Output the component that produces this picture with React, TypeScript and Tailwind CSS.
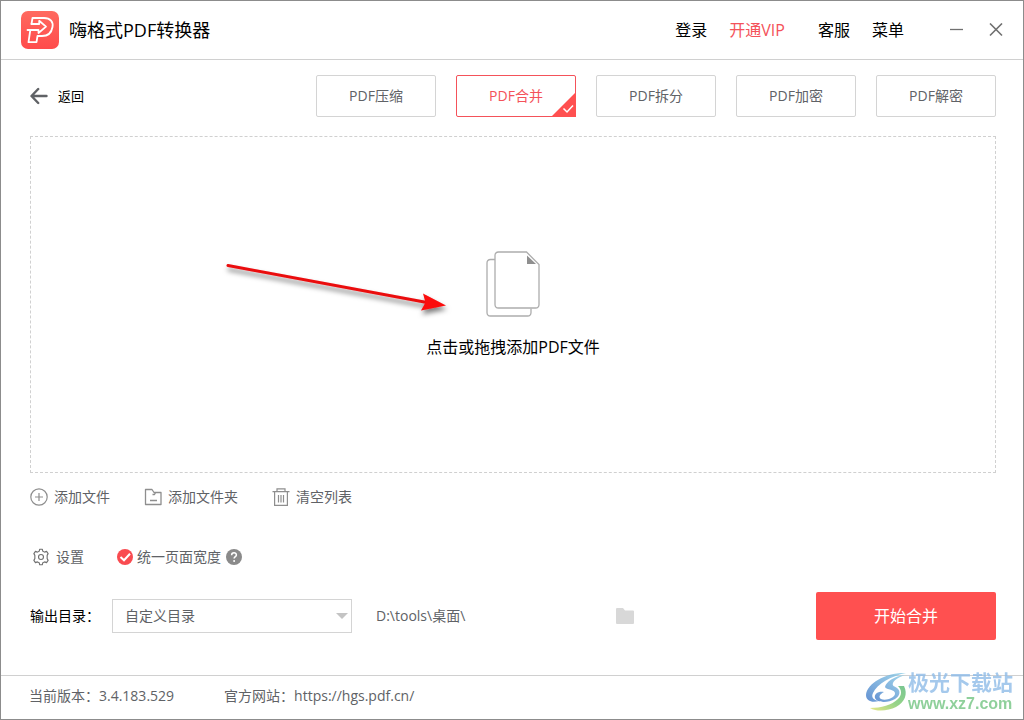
import { useState } from "react";

const tabs = ["PDF压缩", "PDF合并", "PDF拆分", "PDF加密", "PDF解密"];

function Logo() {
  return (
    <svg width="38" height="38" viewBox="0 0 38 38" fill="none">
      <defs>
        <linearGradient id="logoBg" x1="0" y1="0" x2="0" y2="1">
          <stop offset="0" stopColor="#ff6a60" />
          <stop offset="1" stopColor="#ff4b4b" />
        </linearGradient>
      </defs>
      <rect width="38" height="38" rx="7" fill="url(#logoBg)" />
      <g stroke="#fff" strokeWidth="1.8" strokeLinejoin="round" strokeLinecap="round">
        <path d="M10.5 13 L11.5 7 H23 C29.5 7 32.5 11 31.5 16 C30.5 22 26.5 25 21 25 H16.5 L15.5 31.2 H7.500 L9.300 19" />
        <path d="M10.500 13 H18.200 V9.800 L25 15.600 L17.500 22 V19 H6.500" />
      </g>
    </svg>
  );
}

function BackIcon() {
  return (
    <svg width="18" height="18" viewBox="0 0 18 18" fill="none" stroke="#606266" strokeWidth="2.4" strokeLinecap="round" strokeLinejoin="round">
      <path d="M16.5 9H2M8.200 2L1.500 9L8.200 16" />
    </svg>
  );
}

function FilesIcon() {
  return (
    <svg width="54" height="66" viewBox="0 0 54 66" fill="none" stroke="#adadad" strokeWidth="1.3">
      <path d="M9 8.5H4.5Q1 8.5 1 12V61.5Q1 65 4.5 65H41.5Q45 65 45 61.5V57.5" />
      <path d="M12.5 1H40.5L53 13.5V53.5Q53 57 49.5 57H12.5Q9 57 9 53.5V4.5Q9 1 12.5 1Z" fill="#fff" />
      <path d="M41 4.5V13H50Z" fill="#8f8f8f" stroke="none" />
    </svg>
  );
}

function Pointer() {
  return (
    <svg className="pointer-events-none absolute top-[120px] left-[191px]" width="236" height="68" viewBox="0 0 236 68" fill="none">
      <defs>
        <filter id="arrowShadow" x="-10%" y="-30%" width="120%" height="180%">
          <feDropShadow dx="1" dy="4" stdDeviation="2.5" floodColor="#000" floodOpacity="0.5" />
        </filter>
      </defs>
      <g filter="url(#arrowShadow)">
        <path d="M6 8.5L205 45.500" stroke="#ea0a0e" strokeWidth="3" strokeLinecap="round" />
        <path d="M201 36.500L224 48.500L199 53.500L203.500 45.500Z" fill="#fb0a0a" />
      </g>
    </svg>
  );
}

function AddIcon() {
  return (
    <svg width="18" height="18" viewBox="0 0 18 18" fill="none" stroke="#8e8e8e" strokeWidth="1.2">
      <circle cx="9" cy="9" r="8.2" />
      <path d="M9 5V13M5 9H13" />
    </svg>
  );
}

function AddFolderIcon() {
  return (
    <svg width="18" height="18" viewBox="0 0 18 18" fill="none" stroke="#8e8e8e" strokeWidth="1.3" strokeLinejoin="round">
      <path d="M1.5 1.500H8L10 4.500H17V16.500H1.500Z" />
      <path d="M6 12.500H13M8.500 6.500H10.500L11.500 4.500" />
    </svg>
  );
}

function TrashIcon() {
  return (
    <svg width="18" height="18" viewBox="0 0 18 18" fill="none" stroke="#8e8e8e" strokeWidth="1.2">
      <path d="M0.5 3.6H17.5M5 3.5V0.8H13V3.5M2.6 3.6V17.3H15.4V3.6" />
      <path d="M6.5 7V14.5M9 7V14.5M11.5 7V14.5" />
    </svg>
  );
}

function GearIcon() {
  return (
    <svg width="18" height="18" viewBox="0 0 24 24" fill="none" stroke="#707070" strokeWidth="1.5" strokeLinejoin="round">
      <path d="M9.6 4.200L10.300 1.700H13.700L14.400 4.200L16.800 5.500L19.400 4.500L21.500 7.500L20.200 9.800V14.200L21.500 16.500L19.400 19.500L16.800 18.500L14.400 19.800L13.700 22.300H10.300L9.600 19.800L7.200 18.500L4.600 19.500L2.500 16.500L3.800 14.200V9.800L2.500 7.500L4.600 4.500L7.200 5.500Z" />
      <circle cx="12" cy="12" r="3.3" />
    </svg>
  );
}

function Watermark() {
  return (
    <div className="pointer-events-none absolute right-[10px] bottom-[5px] flex items-center opacity-80">
      <svg width="42" height="40" viewBox="0 0 42 40">
        <defs>
          <linearGradient id="swirlBlue" x1="0" y1="1" x2="1" y2="0">
            <stop offset="0" stopColor="#3f78c8" />
            <stop offset="1" stopColor="#8fd0e8" />
          </linearGradient>
          <linearGradient id="swirlGreen" x1="0" y1="1" x2="1" y2="0">
            <stop offset="0" stopColor="#e3e36a" />
            <stop offset="0.5" stopColor="#7cc96b" />
            <stop offset="1" stopColor="#58b878" />
          </linearGradient>
        </defs>
        <path d="M40 1C21 0 1 11 0 23C0 29 6 31 13 29C7 28 5 25 7 21C11 12 25 4 40 1Z" fill="url(#swirlBlue)" />
        <path d="M39 3C28 4 20 10 19 15C20 18 30 17 29 22C28 26 20 29 15 27C12 25 14 22 18 20C12 19 8 22 9 26C11 31 22 31 29 27C34 24 35 19 31 16C28 14 26 14 27 11C29 7 34 5 39 3Z" fill="url(#swirlBlue)" />
        <path d="M32 14H38C42 22 39 30 30 35C22 39 11 40 4 36C15 36 26 33 32 27C36 23 36 18 32 14Z" fill="url(#swirlGreen)" />
      </svg>
      <div className="flex flex-col whitespace-nowrap">
        <span className="text-[21px] leading-6 font-bold text-[#8fbce8]">极光下载站</span>
        <span className="font-['Liberation_Sans',sans-serif] text-base leading-5 font-bold text-[#74c583]">www.xz7.com</span>
      </div>
    </div>
  );
}

export default function App() {
  const [activeTab, setActiveTab] = useState("PDF合并");
  const [sameWidth, setSameWidth] = useState(true);

  return (
    <div className="relative flex min-h-screen flex-col border border-[#8c8c8c] bg-white font-['Open_Sans','Noto_Sans_CJK_SC',sans-serif] text-sm text-[#606266]">
      {/* Title bar */}
      <header className="flex h-[59px] items-center border-b border-[#d0d0d0] px-5 text-black">
        <Logo />
        <h1 className="ml-[10px] text-lg">嗨格式PDF转换器</h1>
        <nav className="ml-auto flex items-center text-base">
          <button>登录</button>
          <button className="ml-[22px] text-[#f4525a]">开通VIP</button>
          <button className="ml-[33px]">客服</button>
          <button className="ml-[22px]">菜单</button>
        </nav>
        <button aria-label="最小化" className="ml-[46px]">
          <svg width="13" height="14" viewBox="0 0 13 14" stroke="#707070" strokeWidth="1.3">
            <path d="M0 6.5H13" />
          </svg>
        </button>
        <button aria-label="关闭" className="ml-[26px]">
          <svg width="14" height="14" viewBox="0 0 14 14" stroke="#707070" strokeWidth="1.6">
            <path d="M1 0.5L13 12.5M13 0.5L1 12.5" />
          </svg>
        </button>
      </header>

      <main className="flex flex-1 flex-col pt-[15px] pr-[27px] pb-[35px] pl-[29px]">
        <div className="flex items-center justify-between">
          <button className="flex items-center gap-[10px] text-[13px] text-black">
            <BackIcon />
            返回
          </button>
          <div className="flex gap-5">
            {tabs.map((tab) => (
              <button
                key={tab}
                onClick={() => setActiveTab(tab)}
                className={`relative h-[42px] w-[120px] rounded-xs border ${
                  tab === activeTab ? "border-[#f4525a] text-[#f4525a]" : "border-[#d4d4d4]"
                }`}
              >
                {tab}
                {tab === activeTab && (
                  <svg className="absolute -right-px -bottom-px" width="25" height="25" viewBox="0 0 25 25">
                    <path d="M25 0V25H0Z" fill="#ff5050" />
                    <path d="M12.5 16.500L16 20L22 13.500" fill="none" stroke="#fff" strokeWidth="1.5" />
                  </svg>
                )}
              </button>
            ))}
          </div>
        </div>

        {/* Drop area */}
        <button className="relative mt-[19px] flex flex-1 flex-col items-center justify-center border border-dashed border-[#d0d0d0] text-base text-black">
          <FilesIcon />
          <span className="mt-[18px]">点击或拖拽添加PDF文件</span>
          <Pointer />
        </button>

        <div className="mt-3 flex h-6 items-center gap-[34px]">
          <button className="flex items-center gap-[6px]">
            <AddIcon />
            添加文件
          </button>
          <button className="flex items-center gap-[6px]">
            <AddFolderIcon />
            添加文件夹
          </button>
          <button className="flex items-center gap-[6px]">
            <TrashIcon />
            清空列表
          </button>
        </div>

        <div className="mt-9 flex h-6 items-center pl-0.5">
          <button className="flex items-center gap-[6px]">
            <GearIcon />
            设置
          </button>
          <label className="ml-[33px] flex items-center gap-1">
            <input
              type="checkbox"
              checked={sameWidth}
              onChange={(e) => setSameWidth(e.target.checked)}
              className="peer sr-only"
            />
            <svg width="16" height="16" viewBox="0 0 16 16" className="fill-[#c8c8c8] peer-checked:fill-[#f94b50]">
              <circle cx="8" cy="8" r="8" />
              <path d="M3.500 8L7 11.300L13 4.800" fill="none" stroke="#fff" strokeWidth="2" />
            </svg>
            统一页面宽度
          </label>
          <button aria-label="帮助" className="ml-[5px]">
            <svg width="16" height="16" viewBox="0 0 16 16" fill="none">
              <circle cx="8" cy="8" r="8" fill="#8a8a8a" />
              <path d="M5.6 6.300C5.600 3 10.500 3.100 10.400 6C10.400 7.600 8.100 7.800 8.100 9.600" stroke="#fff" strokeWidth="1.5" />
              <circle cx="8.1" cy="11.900" r="1" fill="#fff" />
            </svg>
          </button>
        </div>

        <div className="mt-[23px] flex items-center">
          <label htmlFor="outputDir" className="text-black">输出目录：</label>
          <div className="relative ml-3">
            <select id="outputDir" className="h-[34px] w-[240px] appearance-none border border-[#d4d4d4] bg-white pl-3">
              <option>自定义目录</option>
            </select>
            <svg className="pointer-events-none absolute top-[14px] right-1" width="12" height="6" viewBox="0 0 12 6" fill="#c4c4c4">
              <path d="M0 0H12L6 6Z" />
            </svg>
          </div>
          <span className="ml-6 w-[240px]">D:\tools\桌面\</span>
          <button aria-label="打开文件夹">
            <svg width="18" height="16" viewBox="0 0 18 16" fill="#d8d8d8">
              <path d="M1 0H7L9 2.5H17Q18 2.5 18 3.500V15Q18 16 17 16H1Q0 16 0 15V1Q0 0 1 0Z" />
            </svg>
          </button>
          <button className="ml-auto h-12 w-[180px] rounded-xs bg-[#ff5050] text-base text-white">开始合并</button>
        </div>
      </main>

      <footer className="flex h-11 items-center border-t border-[#d0d0d0] pb-1 pl-7">
        <span>当前版本：3.4.183.529</span>
        <span className="ml-[50px]">
          官方网站：<a href="https://hgs.pdf.cn/">https://hgs.pdf.cn/</a>
        </span>
      </footer>

      <Watermark />
    </div>
  );
}
